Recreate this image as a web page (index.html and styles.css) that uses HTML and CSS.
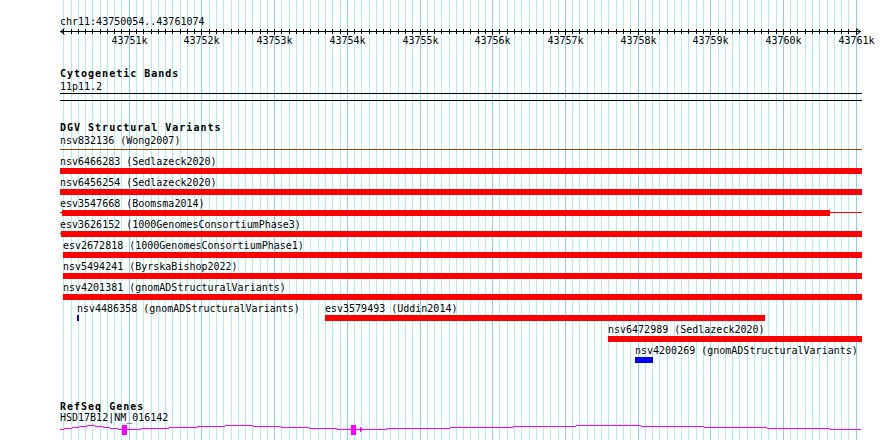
FILE: index.html
```html
<!DOCTYPE html>
<html>
<head>
<meta charset="utf-8">
<link rel="stylesheet" href="styles.css">
</head>
<body>

<div class="panel">
  <svg class="grid" id="grid" width="802" height="440"></svg>

  <div class="ruler-block">
    <div class="chrom">chr11:43750054..43761074</div>
    <svg class="ruler" id="ruler" width="802" height="18"></svg>
  </div>

  <div class="track cyto">
    <div class="track-title">Cytogenetic Bands</div>
    <div class="track-sub">11p11.2</div>
    <div class="band"></div>
  </div>

  <div class="track dgv">
    <div class="track-title">DGV Structural Variants</div>
    <div class="rows">
      <div class="row">
        <div class="feature" style="left:0;width:802px">
          <div class="label">nsv832136 (Wong2007)</div>
          <div class="glyph"><div class="thin brown"></div></div>
        </div>
      </div>
      <div class="row">
        <div class="feature" style="left:0;width:802px">
          <div class="label">nsv6466283 (Sedlazeck2020)</div>
          <div class="bar"></div>
        </div>
      </div>
      <div class="row">
        <div class="feature" style="left:0;width:802px">
          <div class="label">nsv6456254 (Sedlazeck2020)</div>
          <div class="bar"></div>
        </div>
      </div>
      <div class="row">
        <div class="feature" style="left:0;width:802px">
          <div class="label">esv3547668 (Boomsma2014)</div>
          <div class="glyph"><div class="thin"></div><div class="bar" style="margin-left:2px;width:768px"></div></div>
        </div>
      </div>
      <div class="row">
        <div class="feature" style="left:0;width:802px">
          <div class="label">esv3626152 (1000GenomesConsortiumPhase3)</div>
          <div class="glyph"><div class="thin"></div><div class="bar" style="margin-left:1px"></div></div>
        </div>
      </div>
      <div class="row">
        <div class="feature" style="left:3px;width:799px">
          <div class="label">esv2672818 (1000GenomesConsortiumPhase1)</div>
          <div class="bar"></div>
        </div>
      </div>
      <div class="row">
        <div class="feature" style="left:3px;width:799px">
          <div class="label">nsv5494241 (ByrskaBishop2022)</div>
          <div class="bar"></div>
        </div>
      </div>
      <div class="row">
        <div class="feature" style="left:3px;width:799px">
          <div class="label">nsv4201381 (gnomADStructuralVariants)</div>
          <div class="bar"></div>
        </div>
      </div>
      <div class="row">
        <div class="feature" style="left:17px;width:2px">
          <div class="label">nsv4486358 (gnomADStructuralVariants)</div>
          <div class="bar blue"></div>
        </div>
        <div class="feature" style="left:265px;width:440px">
          <div class="label">esv3579493 (Uddin2014)</div>
          <div class="bar"></div>
        </div>
      </div>
      <div class="row">
        <div class="feature" style="left:548px;width:254px">
          <div class="label">nsv6472989 (Sedlazeck2020)</div>
          <div class="bar"></div>
        </div>
      </div>
      <div class="row">
        <div class="feature" style="left:575px;width:18px">
          <div class="label">nsv4200269 (gnomADStructuralVariants)</div>
          <div class="bar blue"></div>
        </div>
      </div>
    </div>
  </div>

  <div class="track genes">
    <div class="track-title">RefSeq Genes</div>
    <div class="track-sub">HSD17B12|NM_016142</div>
    <svg class="gene" width="802" height="12">
      <g class="intron">
        <polyline points="0,5.5 31,1.5 62,5.5"/>
        <polyline points="67,5.5 179,1.5 291,5.5"/>
        <polyline points="296,5.5 548,1.5 801,5.5"/>
        <polyline points="300,3.5 302.5,5.5 300,7.5"/>
      </g>
      <rect class="exon" x="62" y="1" width="5" height="10"/>
      <rect class="exon" x="291" y="1" width="5" height="10"/>
    </svg>
  </div>
</div>

<script>
  const START = 43750054;
  const END = 43761074;
  const WIDTH = 801;
  const scale = WIDTH / (END - START);
  const svgNS = 'http://www.w3.org/2000/svg';

  function xOf(pos) {
    return Math.round((pos - START) * scale) + 0.5;
  }

  function add(parent, tag, attrs, text) {
    const el = document.createElementNS(svgNS, tag);
    for (const k in attrs) el.setAttribute(k, attrs[k]);
    if (text) el.textContent = text;
    parent.appendChild(el);
    return el;
  }

  const grid = document.getElementById('grid');
  const ruler = document.getElementById('ruler');

  // ruler line + arrow heads
  add(ruler, 'line', {x1: 0, x2: WIDTH, y1: 3.5, y2: 3.5, class: 'tick'});
  add(ruler, 'polyline', {points: '4.5,0.5 0.5,3.5 4.5,6.5', class: 'arrow'});
  add(ruler, 'polyline', {points: '796.5,0.5 800.5,3.5 796.5,6.5', class: 'arrow'});

  for (let pos = Math.ceil(START / 100) * 100; pos <= END; pos += 100) {
    const x = xOf(pos);
    const major = pos % 1000 === 0;
    add(grid, 'line', {x1: x, x2: x, y1: 0, y2: 440, class: major ? 'major' : 'minor'});
    add(ruler, 'line', {x1: x, x2: x, y1: 1, y2: major ? 7 : 6, class: 'tick'});
    if (major) {
      add(ruler, 'text', {x: x, y: 16, class: 'tick-label'}, (pos / 1000) + 'k');
    }
  }
</script>

</body>
</html>
```

FILE: styles.css
```css
* {
  box-sizing: border-box;
}

body {
  margin: 0;
  background: #fff;
  color: #000;
  font-family: "DejaVu Sans Mono", "Liberation Mono", monospace;
  font-size: 10px;
}

.panel {
  position: relative;
  z-index: 0;
  width: 802px;
  height: 440px;
  margin-left: 60px;
}

/* background grid, one line per 100bp */
.grid {
  position: absolute;
  top: 0;
  left: 0;
  z-index: -1;
  shape-rendering: crispEdges;
}

.grid .minor {
  stroke: #afeeee;
}

.grid .major {
  stroke: #87cefa;
}

.ruler-block {
  padding-top: 16px;
}

.chrom,
.track-sub,
.label {
  line-height: 12px;
  white-space: nowrap;
}

.ruler {
  display: block;
  overflow: visible;
  shape-rendering: crispEdges;
}

.ruler .tick,
.ruler .arrow {
  stroke: #000;
  fill: none;
}

.ruler .arrow {
  shape-rendering: auto;
}

.tick-label {
  font-size: 10px;
  text-anchor: middle;
  fill: #000;
}

.track-title {
  font-weight: bold;
  letter-spacing: 1px;
  line-height: 12px;
  white-space: nowrap;
}

.cyto {
  margin-top: 22px;
}

.track-sub {
  margin-top: 1px;
}

.band {
  height: 8px;
  border-top: 1px solid #000;
  border-bottom: 1px solid #000;
}

.dgv {
  margin-top: 21px;
}

.rows {
  margin-top: 1px;
}

.row {
  position: relative;
  height: 21px;
}

.feature {
  position: absolute;
  top: 0;
}

.glyph {
  position: relative;
  height: 6px;
}

.bar {
  position: relative;
  height: 6px;
  background: #f00;
}

.bar.blue {
  background: #0000ff;
}

.thin {
  position: absolute;
  left: 0;
  right: 0;
  top: 2px;
  height: 1px;
  background: #f00;
}

.thin.brown {
  background: #8b4513;
}

.genes {
  margin-top: 35px;
}

.genes .track-title {
  line-height: 11px;
}

.genes .track-sub {
  margin-top: 0;
}

.gene {
  display: block;
}

.gene .intron polyline {
  fill: none;
  stroke: #f0f;
  shape-rendering: crispEdges;
}

.gene .exon {
  fill: #f0f;
}
```
